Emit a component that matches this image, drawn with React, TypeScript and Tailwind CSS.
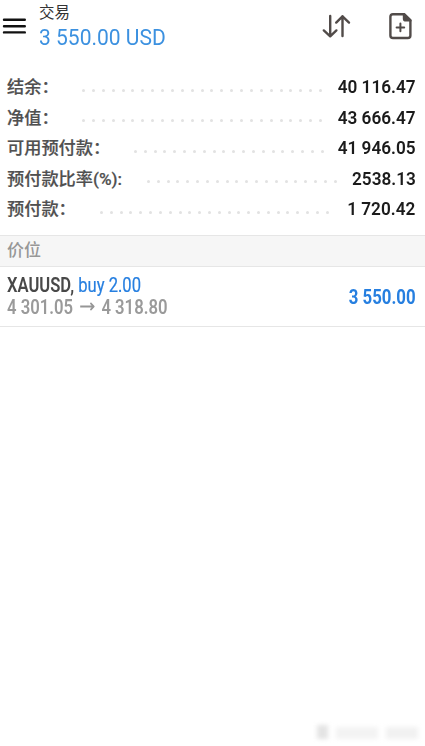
interface BalanceRow {
  label: string;
  value: string;
  dots: number;
  leader: string;
}

const balanceRows: BalanceRow[] = [
  { label: '结余：', value: '40 116.47', dots: 25, leader: 'ml-[82px] w-[240px]' },
  { label: '净值：', value: '43 666.47', dots: 25, leader: 'ml-[82px] w-[240px]' },
  { label: '可用预付款：', value: '41 946.05', dots: 20, leader: 'ml-[134px] w-[190px]' },
  { label: '预付款比率(%):', value: '2538.13', dots: 20, leader: 'ml-[147px] w-[190px]' },
  { label: '预付款：', value: '1 720.42', dots: 24, leader: 'ml-[100px] w-[229px]' },
];

function MenuIcon() {
  return (
    <svg width="24" height="18" viewBox="0 0 24 18" stroke="#111" strokeWidth="2.4" strokeLinecap="round">
      <path d="M2 2.8H22.8M2 9.2H22.8M2 15.4H22.8" />
    </svg>
  );
}

function SortIcon() {
  return (
    <svg width="30" height="26" viewBox="0 0 30 26" fill="none" stroke="#514b49" strokeWidth="2.4" strokeLinecap="round" strokeLinejoin="round">
      <path d="M9.2 3V23M2.8 17.4L9.2 23.3L15.4 17.4" />
      <path d="M21.5 23V3.2M15.2 9.6L21.5 3.4L28 9.6" />
    </svg>
  );
}

function NewOrderIcon() {
  return (
    <svg width="26" height="30" viewBox="0 0 26 30" fill="none" stroke="#514b49" strokeWidth="2.4" strokeLinecap="round" strokeLinejoin="round">
      <path d="M17 3.2H6Q3.4 3.2 3.4 5.8V24.4Q3.4 27 6 27H20.8Q23.4 27 23.4 24.4V9.4Z" />
      <path d="M17 3.2V7.4Q17 9.4 19 9.4H23.4Z" fill="#514b49" />
      <path d="M13.4 12.6V20.2M9.6 16.4H17.2" strokeWidth="2" />
    </svg>
  );
}

export default function App() {
  return (
    <div className="flex h-[746px] w-[425px] flex-col overflow-hidden bg-white font-[Roboto,'Noto_Sans_CJK_SC',sans-serif]">
      <header className="flex h-[72px] shrink-0 items-start">
        <div className="ml-[2px] mt-[17px] w-6">
          <MenuIcon />
        </div>
        <div className="ml-[13px] mt-[3px] flex-1 whitespace-nowrap">
          <div className="text-[15.5px] leading-[21px] text-[#333]">交易</div>
          <div className="origin-left scale-x-[0.955] text-[22px] leading-[28px] text-[#3c91e0]">3 550.00 USD</div>
        </div>
        <div className="mt-[13px]">
          <SortIcon />
        </div>
        <div className="ml-[36px] mr-[12px] mt-[11px]">
          <NewOrderIcon />
        </div>
      </header>

      <section className="h-[163px] shrink-0">
        {balanceRows.map((row) => (
          <div key={row.label} className="grid h-[30.5px] grid-cols-1 items-center whitespace-nowrap text-[17.2px] leading-[30px]">
            <span className="col-start-1 row-start-1 pl-[7px] font-medium text-[#505050] [-webkit-text-stroke:0.2px_#505050]">{row.label}</span>
            <div className={`col-start-1 row-start-1 mt-[6px] flex justify-between ${row.leader}`}>
              {Array.from({ length: row.dots }, (_, i) => (
                <span key={i} className="size-[3px] rounded-full bg-[#e2e2e2]" />
              ))}
            </div>
            <span className="col-start-1 row-start-1 mr-[9.5px] origin-right scale-x-[0.955] justify-self-end text-[18px] font-semibold text-[#1b1b1b]">{row.value}</span>
          </div>
        ))}
      </section>

      <div className="flex h-8 shrink-0 items-center border-y border-[#e6e6e6] bg-[#f6f6f6] pl-[7px] text-[17px] font-medium text-[#979797]">
        价位
      </div>

      <div className="flex h-[60px] shrink-0 items-center justify-between border-b border-[#e6e6e6] pl-[7px] pr-[9.5px]">
        <div className="whitespace-nowrap leading-[21.5px]">
          <div className="origin-left scale-x-[0.855] text-[19.4px]">
            <span className="font-semibold text-[#484848]">XAUUSD, </span>
            <span className="text-[#267fe0] [-webkit-text-stroke:0.2px_#267fe0]">buy 2.00</span>
          </div>
          <div className="flex origin-left scale-x-[0.86] items-center text-[19.4px] font-semibold text-[#9a9a9a]">
            <span>4 301.05</span>
            <svg className="mx-[8px]" width="17" height="10" viewBox="0 0 17 10" fill="none" stroke="#969696" strokeWidth="1.8">
              <path d="M0 4.5H16M12 1L16 4.5L12 8" />
            </svg>
            <span>4 318.80</span>
          </div>
        </div>
        <div className="origin-right scale-x-[0.84] text-[20px] font-bold leading-[24px] text-[#267fe0]">3 550.00</div>
      </div>

      {/* faded stamp in the bottom corner */}
      <div className="mb-[7px] ml-auto mr-[7px] mt-auto flex items-end gap-[8px] blur-[2px]">
        <span className="h-[14px] w-[11px] bg-[#e4e4e4]" />
        <span className="h-[12px] w-[42px] bg-[#f3f3f3]" />
        <span className="h-[12px] w-[32px] bg-[#f1f1f1]" />
      </div>
    </div>
  );
}
